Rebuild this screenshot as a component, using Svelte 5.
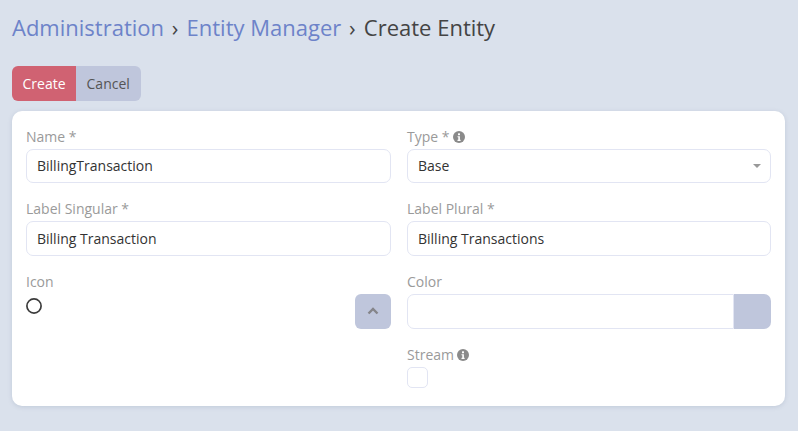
<script>
	let name = 'BillingTransaction';
	let labelSingular = 'Billing Transaction';
	let labelPlural = 'Billing Transactions';
</script>

<div class="page">
	<h3 class="crumbs">
		<a href="#admin">Administration</a>
		<span class="sep">›</span>
		<a href="#entities">Entity Manager</a>
		<span class="sep">›</span>
		<span>Create Entity</span>
	</h3>

	<div class="actions">
		<button class="btn danger">Create</button>
		<button class="btn">Cancel</button>
	</div>

	<div class="panel">
		<div class="grid">
			<div class="cell">
				<label for="name">Name *</label>
				<input id="name" bind:value={name} />
			</div>
			<div class="cell">
				<label for="type">Type * <svg class="info" viewBox="0 0 12 12"><circle cx="6" cy="6" r="6" fill="#8a8a8a" /><rect x="5" y="2.3" width="2" height="2" rx="0.5" fill="#fff" /><path d="M4.5 5.2h2.4v3.6h.7v1.1H4.5V8.8h.8V6.3h-.8z" fill="#fff" /></svg></label>
				<div class="select" id="type">
					<span>Base</span>
					<i class="caret"></i>
				</div>
			</div>
			<div class="cell">
				<label for="singular">Label Singular *</label>
				<input id="singular" bind:value={labelSingular} />
			</div>
			<div class="cell">
				<label for="plural">Label Plural *</label>
				<input id="plural" bind:value={labelPlural} />
			</div>
			<div class="cell">
				<label for="icon">Icon</label>
				<div class="icon-row">
					<svg class="ring" viewBox="0 0 16 16"><circle cx="8" cy="8" r="7.100" fill="none" stroke="#3b3b3b" stroke-width="1.700" /></svg>
					<button class="up" aria-label="Toggle" id="icon">
						<svg viewBox="0 0 12 8" width="12" height="8"><path d="M1.5 6.5 6 2l4.500 4.500" fill="none" stroke="#85858a" stroke-width="2.400" /></svg>
					</button>
				</div>
			</div>
			<div class="cell">
				<label for="color">Color</label>
				<div class="color-row">
					<input id="color" />
					<span class="swatch"></span>
				</div>
			</div>
			<div class="cell"></div>
			<div class="cell">
				<label for="stream">Stream <svg class="info" viewBox="0 0 12 12"><circle cx="6" cy="6" r="6" fill="#8a8a8a" /><rect x="5" y="2.3" width="2" height="2" rx="0.5" fill="#fff" /><path d="M4.5 5.2h2.4v3.6h.7v1.1H4.5V8.8h.8V6.3h-.8z" fill="#fff" /></svg></label>
				<span class="check" id="stream"></span>
			</div>
		</div>
	</div>
</div>

<style>
	:global(body) {
		background: #dae1ec;
		font-family: 'Open Sans', sans-serif;
		font-size: 14px;
		color: #333;
	}

	.page {
		padding: 0 13px 0 12px;
		height: 431px;
		box-sizing: border-box;
		overflow: hidden;
	}

	.crumbs {
		margin: 0;
		padding-top: 11px;
		height: 66px;
		box-sizing: border-box;
		font-size: 22px;
		line-height: 32px;
		font-weight: 400;
		color: #444;
	}

	.crumbs a {
		color: #6d83c9;
		text-decoration: none;
	}

	.sep {
		margin: 0 2.500px 0 2px;
	}

	.actions {
		display: flex;
		height: 35px;
		margin-bottom: 10px;
	}

	.btn {
		height: 35px;
		border: 0;
		padding: 0 11px 0 10.500px;
		font: inherit;
		color: #555;
		background: #bfc6dc;
		border-radius: 0 6px 6px 0;
	}

	.btn.danger {
		padding: 0 10.500px;
		background: #d06272;
		color: #fff;
		border-radius: 6px 0 0 6px;
	}

	.panel {
		height: 295px;
		box-sizing: border-box;
		background: #fff;
		border-radius: 10px;
		padding: 13.500px 14px 0;
		box-shadow: 0 1px 4px rgba(120, 135, 165, 0.25);
	}

	.grid {
		display: grid;
		grid-template-columns: 365px 364px;
		column-gap: 16px;
	}

	.cell {
		height: 72.750px;
	}

	label {
		display: flex;
		align-items: center;
		gap: 3px;
		height: 24px;
		line-height: 22px;
		box-sizing: border-box;
		color: #9a9a9a;
	}

	.info {
		width: 12px;
		height: 12px;
	}

	input,
	.select {
		display: block;
		width: 100%;
		height: 34.500px;
		box-sizing: border-box;
		border: 1px solid #e2e5f3;
		border-radius: 7px;
		padding: 0 10px;
		font: inherit;
		color: #333;
		background: #fff;
		outline: none;
	}

	.select {
		display: flex;
		align-items: center;
		justify-content: space-between;
	}

	.caret {
		width: 0;
		height: 0;
		margin-right: -1px;
		border-left: 4px solid transparent;
		border-right: 4px solid transparent;
		border-top: 4px solid #999;
	}

	.icon-row {
		display: flex;
		justify-content: space-between;
		align-items: flex-start;
	}

	.ring {
		width: 16px;
		height: 16px;
		margin-top: 4px;
	}

	.up {
		width: 36px;
		height: 34.500px;
		padding: 0;
		border: 0;
		border-radius: 6px;
		background: #bfc6dc;
		display: flex;
		align-items: center;
		justify-content: center;
	}

	.color-row {
		display: flex;
	}

	.color-row input {
		flex: 1;
		min-width: 0;
		border-radius: 7px 0 0 7px;
	}

	.swatch {
		width: 37px;
		height: 34.500px;
		background: #bfc6dc;
		border-radius: 0 7px 7px 0;
	}

	.check {
		display: block;
		width: 21px;
		height: 21px;
		box-sizing: border-box;
		border: 1px solid #e2e5f3;
		border-radius: 5px;
	}
</style>
